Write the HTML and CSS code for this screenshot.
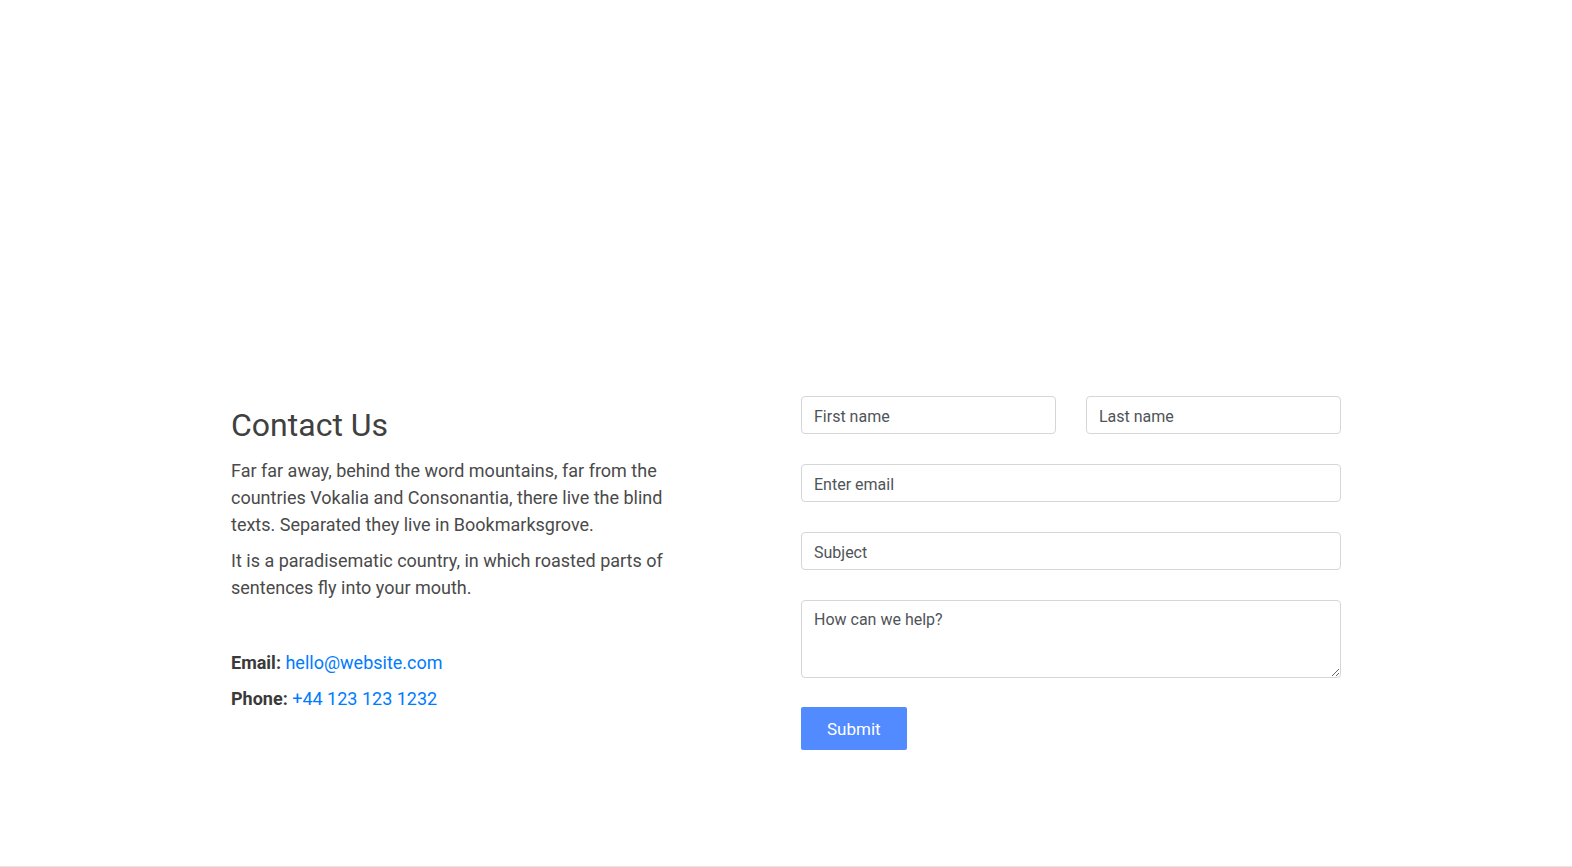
FILE: index.html
```html
<!DOCTYPE html>
<html lang="en">
<head>
<meta charset="utf-8">
<title>Contact Us</title>
<link rel="stylesheet" href="styles.css">
</head>
<body>
<section class="contact">
  <div class="container">
    <div class="col-info">
      <h2 class="title">Contact Us</h2>
      <p class="lead">Far far away, behind the word mountains, far from the countries Vokalia and Consonantia, there live the blind texts. Separated they live in Bookmarksgrove.</p>
      <p class="lead">It is a paradisematic country, in which roasted parts of sentences fly into your mouth.</p>
      <p class="detail detail-first"><strong>Email:</strong> <a href="#">hello@website.com</a></p>
      <p class="detail"><strong>Phone:</strong> <a href="#">+44 123 123 1232</a></p>
    </div>
    <form class="col-form">
      <div class="form-row">
        <input class="field" type="text" placeholder="First name">
        <input class="field" type="text" placeholder="Last name">
      </div>
      <input class="field" type="email" placeholder="Enter email">
      <input class="field" type="text" placeholder="Subject">
      <textarea class="field area" placeholder="How can we help?"></textarea>
      <div class="actions">
        <button class="btn" type="submit">Submit</button>
      </div>
    </form>
  </div>
</section>
<footer class="footer"></footer>
</body>
</html>
```

FILE: styles.css
```css
* { box-sizing: border-box; }

html, body {
  margin: 0;
  padding: 0;
  background: #ffffff;
}

body {
  font-family: Roboto, "Liberation Sans", Arial, sans-serif;
  font-size: 18px;
  line-height: 1.5;
  color: #4a4a4a;
}

.contact {
  height: 866px;
  padding-top: 396px;
}

.container {
  width: 1140px;
  margin: 0 auto;
  display: flex;
}

.col-info {
  width: 570px;
  padding: 0 15px;
}

.col-info > * { max-width: 445px; }

.title {
  margin: 10px 0 13px;
  font-size: 32px;
  font-weight: 400;
  line-height: 1.2;
  color: #404040;
}

.lead {
  margin: 0 0 9px;
}

.detail {
  margin: 0 0 9px;
  color: #3a3a3a;
}

.detail-first { margin-top: 48px; }

.detail strong { font-weight: 700; }

.detail a {
  color: #007bff;
  text-decoration: none;
}

.col-form {
  width: 570px;
  padding: 0 15px;
  display: flex;
  flex-direction: column;
  gap: 30px;
}

.form-row {
  display: flex;
  gap: 30px;
}

.form-row .field { flex: 1 1 0; min-width: 0; }

.field {
  display: block;
  width: 100%;
  height: 38px;
  padding: 7px 12px 5px;
  font-family: Roboto, "Liberation Sans", Arial, sans-serif;
  font-size: 16px;
  line-height: 1.5;
  color: #495057;
  background: #ffffff;
  border: 1px solid #d6d6d6;
  border-radius: 4px;
  outline: none;
}

.field::placeholder { color: #4f5459; opacity: 1; }

.area {
  height: 78px;
  resize: vertical;
}

.actions { display: flex; margin-top: -1px; }

.btn {
  height: 43px;
  padding: 1px 26px 0;
  font-family: Roboto, "Liberation Sans", Arial, sans-serif;
  font-size: 17px;
  color: #ffffff;
  background: #518bff;
  border: none;
  border-radius: 2px;
  cursor: pointer;
}

.footer {
  border-top: 1px solid #e6e6e6;
  height: 20px;
}
```
